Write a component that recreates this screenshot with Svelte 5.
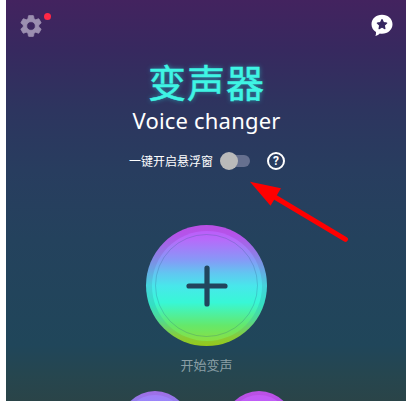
<script>
    let floating = false;
    const modes = ['violet', 'magenta'];

    function toggleFloating() {
        floating = !floating;
    }
</script>

<main class="screen">
    <header class="topbar">
        <div class="settings">
            <svg width="26" height="26" viewBox="0 0 24 24" aria-hidden="true">
                <path fill="#9c8fb0" stroke="#9c8fb0" stroke-width="0.7" d="M19.14 12.94c.04-.3.06-.61.06-.94 0-.32-.02-.64-.07-.94l2.03-1.58a.49.49 0 0 0 .12-.61l-1.92-3.32a.488.488 0 0 0-.59-.22l-2.39.96c-.5-.38-1.03-.7-1.62-.94l-.36-2.54a.484.484 0 0 0-.48-.41h-3.84c-.24 0-.43.17-.47.41l-.36 2.54c-.59.24-1.13.57-1.62.94l-2.39-.96c-.22-.08-.47 0-.59.22L2.74 8.87c-.12.21-.08.47.12.61l2.03 1.58c-.05.3-.09.63-.09.94s.02.64.07.94l-2.03 1.58a.49.49 0 0 0-.12.61l1.92 3.32c.12.22.37.29.59.22l2.39-.96c.5.38 1.03.7 1.62.94l.36 2.54c.05.24.24.41.48.41h3.84c.24 0 .44-.17.47-.41l.36-2.54c.59-.24 1.13-.56 1.62-.94l2.39.96c.22.08.47 0 .59-.22l1.92-3.32c.12-.22.07-.47-.12-.61l-2.01-1.58zM12 16a4 4 0 1 1 0-8 4 4 0 0 1 0 8z" />
            </svg>
            <span class="settings__dot"></span>
        </div>
        <svg class="feedback" width="22" height="23" viewBox="0 0 22 23" aria-hidden="true">
            <path fill="#fff" d="M11 .8C5 .8.5 4.9.5 10.200c0 3.300 1.600 6 4.500 7.700.1 1.500-.1 2.800-.6 4.100 2-.4 3.400-1.300 4.400-2.500.7.1 1.400.2 2.200.2 6 0 10.500-4.200 10.500-9.500S17 .8 11 .8z" />
            <path fill="#35265f" stroke="#35265f" stroke-width="1.200" stroke-linejoin="round" d="M11 5.600l1.450 3 3.250.45-2.400 2.250.6 3.300L11 13l-2.900 1.600.6-3.300-2.400-2.250 3.250-.45z" />
        </svg>
    </header>

    <h1 class="title">变声器</h1>
    <p class="subtitle">Voice changer</p>

    <div class="option">
        <span class="option__label">一键开启悬浮窗</span>
        <button class="switch" class:switch--on={floating} on:click={toggleFloating} aria-label="一键开启悬浮窗">
            <span class="switch__knob"></span>
        </button>
        <span class="help">?</span>
    </div>

    <button class="start" aria-label="开始变声">
        <span class="start__face">
            <svg width="42" height="42" viewBox="0 0 42 42" aria-hidden="true">
                <path d="M21 3v36M3 21h36" stroke="#22455d" stroke-width="5.200" stroke-linecap="round" />
            </svg>
        </span>
    </button>
    <p class="start-label">开始变声</p>

    <div class="modes">
        {#each modes as mode}
            <span class="mode mode--{mode}"><span class="mode__ring"></span></span>
        {/each}
    </div>

    <!-- pointer to the floating window switch -->
    <svg class="arrow" width="100" height="64" viewBox="0 0 100 64" aria-hidden="true">
        <path d="M96.500 59.300L24 16" stroke="#f00" stroke-width="5" stroke-linecap="round" />
        <path d="M1 1.700l31 6.500-10.500 17.500z" fill="#f00" />
    </svg>
</main>

<style>
    :global(body) {
        background: #fff;
        overflow: hidden;
    }

    .screen {
        position: relative;
        display: flex;
        flex-direction: column;
        align-items: center;
        box-sizing: border-box;
        width: 400px;
        height: 401px;
        margin-left: 6px;
        overflow: hidden;
        color: #fff;
        font-family: "Noto Sans CJK SC", sans-serif;
        background: linear-gradient(#43235f 0, #37295f 50px, #2d355f 110px, #283d5f 170px, #24425d 240px, #20465a 345px, #26464f 375px, #2a4448 401px);
    }

    .topbar {
        display: flex;
        flex: none;
        justify-content: space-between;
        align-self: stretch;
        box-sizing: border-box;
        height: 57px;
        padding: 13px 13px 0 12px;
    }

    .settings {
        position: relative;
        height: 26px;
    }

    .settings__dot {
        position: absolute;
        top: 0;
        left: 26px;
        width: 7px;
        height: 7px;
        border-radius: 50%;
        background: #ff2846;
    }

    .feedback {
        margin-top: 1px;
    }

    .title {
        flex: none;
        height: 50px;
        margin: 0 -1px 0 0;
        font-size: 38px;
        font-weight: 400;
        line-height: 47px;
        letter-spacing: 1px;
        color: #3ff5e4;
        text-shadow: 0 0 5px rgba(40, 225, 225, 0.6);
        -webkit-text-stroke: 0.5px #3ff5e4;
    }

    .subtitle {
        flex: none;
        height: 28px;
        margin: 0 -1px 0 0;
        font-family: "Noto Sans", sans-serif;
        font-size: 22px;
        line-height: 26px;
        letter-spacing: 0.2px;
    }

    .option {
        display: flex;
        flex: none;
        align-items: center;
        height: 20px;
        margin: 16px 0 0 2px;
    }

    .option__label {
        width: 85px;
        font-size: 12px;
        line-height: 20px;
        white-space: nowrap;
    }

    .switch {
        display: flex;
        align-items: center;
        width: 29px;
        height: 12px;
        margin-left: 7px;
        padding: 0;
        border: none;
        border-radius: 6px;
        background: #66708f;
    }

    .switch__knob {
        flex: none;
        width: 18px;
        height: 18px;
        margin-left: -1px;
        border-radius: 50%;
        background: #bababa;
    }

    .switch--on .switch__knob {
        margin-left: 12px;
    }

    .help {
        box-sizing: border-box;
        width: 18px;
        height: 18px;
        margin-left: 17px;
        border: 2px solid #fff;
        border-radius: 50%;
        font: 700 12px/14px Roboto, sans-serif;
        text-align: center;
    }

    .start {
        display: flex;
        flex: none;
        align-items: center;
        justify-content: center;
        position: relative;
        width: 121px;
        height: 121px;
        margin: 54px 0 0 1px;
        padding: 0;
        border: none;
        border-radius: 50%;
        background: linear-gradient(#b950e4 0, #b553ea 8%, #9279e6 23%, #68a6e4 37%, #45d3dc 50%, #34dfc3 66%, #53d98e 79%, #86cd3b 92%, #98c719 100%);
    }

    .start__face {
        display: flex;
        align-items: center;
        justify-content: center;
        width: 110px;
        height: 110px;
        border-radius: 50%;
        background: linear-gradient(#bc5dfa 0, #b66bfa 8%, #8798f7 26%, #62c5f1 38%, #48e7eb 50%, #38f7d6 65%, #49f2ac 73%, #65e86a 86%, #8adf42 100%);
    }

    .start__face::after {
        content: '';
        position: absolute;
        box-sizing: border-box;
        width: 103px;
        height: 103px;
        border: 1px solid rgba(40, 90, 130, 0.25);
        border-radius: 50%;
    }

    .start-label {
        flex: none;
        height: 20px;
        margin: 9px 0 0 1px;
        font-size: 13px;
        line-height: 20px;
        color: #8b9fa6;
    }

    .modes {
        display: flex;
        flex: none;
        gap: 34px;
        margin: 16px 0 0 2px;
    }

    .mode {
        display: flex;
        align-items: center;
        justify-content: center;
        width: 70px;
        height: 70px;
        border-radius: 50%;
    }

    .mode__ring {
        width: 62px;
        height: 62px;
        border-radius: 50%;
    }

    .mode--violet {
        background: linear-gradient(#a26de5, #8b80ee 20%, #44d3dc);
    }

    .mode--violet .mode__ring {
        background: linear-gradient(#a17df8, #8b96fa 30%, #48e7eb);
    }

    .mode--magenta {
        background: linear-gradient(#bd51e5, #b050e8 20%, #7870e0);
    }

    .mode--magenta .mode__ring {
        background: linear-gradient(#c45af5, #b464fa 30%, #8798f7);
    }

    .arrow {
        position: absolute;
        top: 180px;
        left: 243px;
    }
</style>
